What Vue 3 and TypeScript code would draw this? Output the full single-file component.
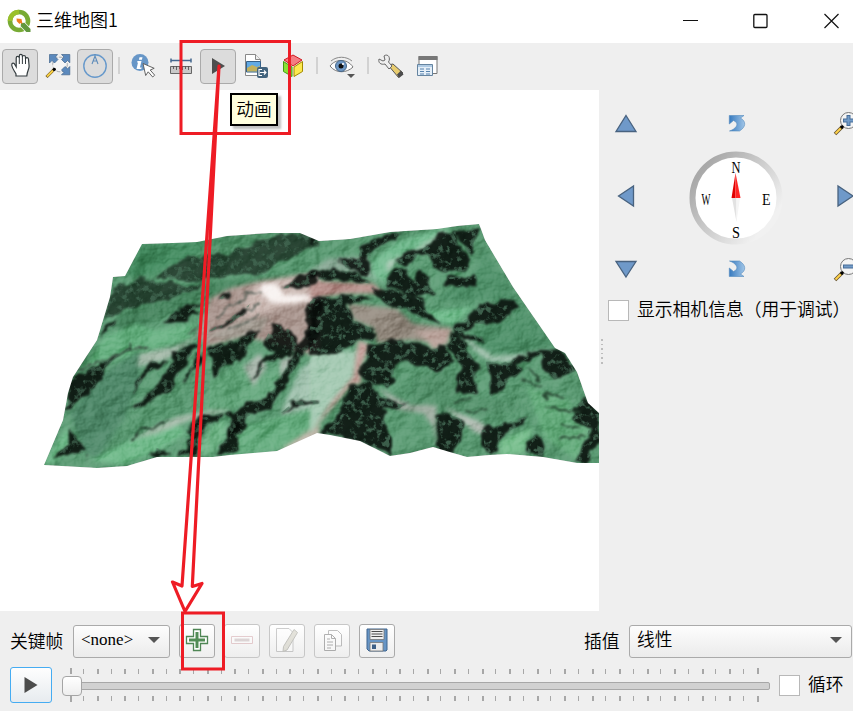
<script setup lang="ts">
interface Tick { x: number; w: number; h: number; y: number }

const ticks: Tick[] = Array.from({ length: 51 }, (_, i) => {
  const edge = i === 0 || i === 50
  return { x: Math.floor(8 + i * 13.74), w: i % 2 === 0 ? 2 : 1, h: edge ? 6 : 5, y: edge ? 0 : 1 }
})

const outline =
  'M142 244L173 243 197 242 227 236 270 233 300 233 319 241 350 239 390 232 437 229 457 226 479 224 481 229 485 240 513 287 555 348 565 353 577 372 588 403 599 413V463L577 463 543 457 507 454 490 455 467 457 453 453 433 447 410 453 390 456 360 441 330 435 317 433 277 451 230 455 213 457 157 457 127 466 97 468 44 465 63 420 68 393 73 377 97 340 110 297 113 277 125 276Z'

const leftShadows: string[] = [
  'M375 172L460 112 520 110 600 108 620 85 700 62 760 45 840 42 868 60V78L800 100 740 130 700 165 620 160 560 175 480 185 430 178Z',
  'M248 200L290 185 340 178 430 190 460 200 520 185 500 205 400 240 330 255 290 270 222 297 235 250Z',
  'M200 350L225 312 268 300 225 335Z',
  'M130 470L190 440 290 388 290 355 302 390 260 410 225 440 200 490 165 530 108 572Z',
  'M430 400L500 370 500 385 455 440 430 505 380 535 300 580 345 530 385 495 412 450Z',
  'M308 525L325 470 365 425 410 416 370 440 340 480Z',
  'M535 390L640 350 690 335 655 380 635 420 590 430 550 480 545 420Z',
  'M530 337L590 300 660 253 645 280 590 318Z',
  'M868 235V345L840 385 805 420 765 500 720 570 650 590 635 640 600 655 592 580 680 545 730 510 780 420 820 350 830 250Z',
  'M438 712L480 660 482 610 510 590 590 580 530 620 508 660 500 712Z',
  'M595 600L630 600 620 690 560 712 590 650Z',
  'M60 722L110 680 118 625 155 672 172 742 160 700 90 712Z',
  'M350 706L380 684 418 697Z',
  'M760 205L800 175 868 155V180L800 205Z',
  'M665 485L690 435 730 400 700 370 730 310 780 330 810 370 780 405 710 430Z',
  'M560 240L610 205 590 238Z',
  'M400 305L450 270 530 245 480 275 520 280 455 300Z',
  'M455 490L500 405 520 400 475 470Z',
  'M750 582L790 545 868 540V552L800 556Z',
]

const rightShadows: string[] = [
  'M0 55L20 60 0 85Z',
  'M0 155L80 150 150 162 180 190 80 180 0 178Z',
  'M0 237L100 225 190 240 110 252 128 300 185 325 188 362 140 362 80 398 0 402Z',
  'M185 205L235 202 340 240 330 260 390 305 340 300 290 270 225 250Z',
  'M145 110L155 80 220 45 280 38 225 65 190 90 180 115Z',
  'M425 30L510 15 500 60 480 110 455 70Z',
  'M260 120L310 95 350 80 400 35 430 40 470 120 475 150 420 160 380 150 350 100 268 135Z',
  'M235 160L290 140 310 190 330 150 360 185 380 220 340 230 310 230 270 210 232 195Z',
  'M410 170L500 168 500 195 405 202Z',
  'M430 325L500 272 510 248 600 240 627 255 560 310 500 312 445 335 520 350 520 365 430 345Z',
  'M415 340L455 352 480 400 500 450 500 520 475 520 440 522 452 450 420 380Z',
  'M185 380L230 365 300 360 360 390 415 380 425 420 380 450 320 430 270 430 235 500 160 485 150 450Z',
  'M130 495L180 485 210 520 260 550 300 560 215 570 240 640 240 705 150 662 20 640 70 600Z',
  'M380 590L400 580 465 600 450 660 430 702 380 685Z',
  'M515 630L580 610 655 588 620 620 570 650 560 705 530 708Z',
  'M648 702L672 645 706 660 702 708Z',
  'M528 425L600 425 640 405 735 385 765 400 795 455 735 478 710 450 700 402 615 430 635 450 545 530Z',
  'M778 568L830 535 868 580V660L825 732 798 722 840 620 790 600Z',
  'M90 130L100 110 175 112 178 165 120 150Z',
]
</script>

<template>
  <div class="window">
    <header class="titlebar">
      <svg class="logo" viewBox="0 0 24 24">
        <circle cx="12" cy="12" r="9" fill="none" stroke="#78ab34" stroke-width="4.6" />
        <path d="M3 12a9 9 0 0 1 9-9" fill="none" stroke="#9ac02c" stroke-width="4.4" />
        <path d="M13 13L22 22" stroke="#fff" stroke-width="6.5" />
        <path d="M14 14l3.5-.2 6 6.2v3h-4.2l-5.6-5.8z" fill="#62983e" />
        <path d="M9.500 9.500l5 .4 1 5-2-1-1 1-2.700-2.700z" fill="#ef7d22" />
      </svg>
      <h1>三维地图1</h1>
      <svg class="winbtn" viewBox="0 0 16 16"><path d="M1 7.500h15" stroke="#111" stroke-width="1" /></svg>
      <svg class="winbtn" viewBox="0 0 16 16"><rect x="1.800" y="1.500" width="13.200" height="13" rx="1" fill="none" stroke="#111" stroke-width="1.300" /></svg>
      <svg class="winbtn last" viewBox="0 0 16 16"><path d="M1.500 1l14 14M15.500 1l-14 14" stroke="#111" stroke-width="1.200" /></svg>
    </header>

    <nav class="toolbar">
      <button class="tool on">
        <svg viewBox="0 0 24 24"><path d="M8 22v-2C6.500 17 4.500 15 3.800 11.500 3.300 8.800 6 8.300 7 10.800l1.200 2V4c0-2.200 3-2.200 3.100 0V2c0-2.200 3-2.200 3.100 0v1c.2-2 3-2 3.100.2V5c.2-1.900 3-1.700 3 .3l.6 6.700c0 4-2 5-2.300 10z" fill="#fff" stroke="#333b3e" stroke-width="1.200" /><path d="M11.300 4v6M14.400 3v7M17.500 4v6" stroke="#333b3e" /></svg>
      </button>
      <button class="tool">
        <svg viewBox="0 0 24 24"><circle cx="13" cy="10.500" r="7.300" fill="#f5f5f5" stroke="#a5a9ad" stroke-dasharray="4 1.500" /><path d="M2.500.5h8L8.500 3 11 5.500 7.500 9 5 6.500 2.500 9zM14.500.5h8.300v8.300L20.500 6.500 18 9l-3.500-3.500L17 3zM22.800 12.500v8.300h-8.300l2.300-2.300-2.300-2.500 3.500-3.500 2.500 2.300z" fill="#5b89bd" stroke="#45678e" stroke-width=".7" /><path d="M7 15.500L-.5 23" stroke="#695324" stroke-width="3" /><path d="M6 16.500L0 22.500" stroke="#f6ce44" stroke-width="2" /><circle cx="7.300" cy="15.300" r="1.600" /></svg>
      </button>
      <button class="tool on">
        <svg viewBox="0 0 24 24"><circle cx="12" cy="12" r="11.200" fill="none" stroke="#6799cb" stroke-width="1.400" /><path d="M9 10l3-8 3 8M10 7h4M12 2V0" fill="none" stroke="#5e8cba" stroke-width="1.100" /></svg>
      </button>
      <i class="sep" />
      <button class="tool">
        <svg viewBox="0 0 24 24"><circle cx="9" cy="8.500" r="8.500" fill="#6796c7" /><path d="M8.500 3.200h3l-.6 2.500h-3zM6.500 7h4l-1.600 6.500h1.800l-.5 1.500H5.500L7 8.500H6z" fill="#fff" /><path d="M12 9.500l2.700 12 2.500-3.700 4.500 5.200 2-1.800-4.500-5.200 4-1.700z" fill="#fff" stroke="#555" stroke-width=".9" /></svg>
      </button>
      <button class="tool">
        <svg viewBox="0 0 24 24"><path d="M2 6.500h20M2 4.500v4M22 4.500v4" stroke="#45688f" stroke-width="1.500" /><path d="M1.500 12.500h21v7h-21z" fill="#c9c9c9" stroke="#666" /><path d="M4.500 12v3M7.500 12v4M10.500 12v3M13.500 12v4M16.500 12v3M19.500 12v4" stroke="#555" stroke-width=".9" /></svg>
      </button>
      <button class="tool on">
        <svg viewBox="0 0 24 24"><path d="M6 4v16l13-8z" fill="#4e4e4e" /></svg>
      </button>
      <button class="tool">
        <svg viewBox="0 0 24 24"><path d="M1.500.5h10l5 5v16h-15z" fill="#fff" stroke="#888" /><path d="M11.500.5v5h5" fill="#eee" stroke="#888" /><path d="M2.500 7.500h14V18h-14z" fill="#62aae5" stroke="#35618a" /><path d="M3 14l5-3 5 2 3-1v5.500H3z" fill="#c2b15e" /><rect x="13" y="13" width="11" height="11" rx="2" fill="#43647e" /><path d="M18 15.500h-3v6h3M16 18.500h6M20 16.500l2 2-2 2" fill="none" stroke="#fff" stroke-width="1.100" /></svg>
      </button>
      <button class="tool">
        <svg viewBox="0 0 24 24"><path d="M12 1l9 5-9 6-9-6z" fill="#f47d83" stroke="#cf171d" /><path d="M2.500 7.500L11 13v9.500l-8.500-5z" fill="#8ae234" stroke="#439b12" /><path d="M21.500 7.500L13 13v9.500l8.500-5z" fill="#fce94f" stroke="#a48a00" /></svg>
      </button>
      <i class="sep" />
      <button class="tool wide">
        <svg viewBox="0 0 26 24"><path d="M1 12C6 5 18 4 24 13 18 19 7 20 1 12z" fill="#fff" stroke="#777" /><path d="M2 7C8 2 17 2 23 7" fill="none" stroke="#888" /><circle cx="12" cy="12" r="5.500" fill="#6f98c5" stroke="#466687" /><circle cx="12" cy="12" r="2.500" fill="#111" /><circle cx="14" cy="10" r="1.100" fill="#fff" /><path d="M18 20h8l-4 4z" fill="#555" /></svg>
      </button>
      <i class="sep" />
      <button class="tool wide">
        <svg viewBox="0 0 26 24"><path d="M10 11l5-1 10 9-4.500 4.500z" fill="#e9cd70" stroke="#555" /><path d="M1 5l4 2 2-1-1-4C10-1 13 4 10.500 8L14 12l-3 3-4-5C3 11 0 9 1 5z" fill="#eee" stroke="#666" /><path d="M19 20.500l4-4 2.500 4L21 24z" fill="#4c4c4c" /></svg>
      </button>
      <button class="tool">
        <svg viewBox="0 0 24 24"><path d="M4 2.500h18v17H4z" fill="#fff" stroke="#777" /><path d="M3.500 2h19v4h-19z" fill="#777" /><path d="M2.500 10.500h15v11h-15z" fill="#e5eff8" stroke="#6584a0" /><path d="M3 11h14v2H3z" fill="#b0cbe4" /><path d="M5 15h4M11 15h4M5 17.500h4M11 17.500h4M5 20h4M11 20h4" stroke="#5682ad" stroke-width="1.200" /></svg>
      </button>
    </nav>

    <main class="content">
      <svg class="terrain" viewBox="0 90 599 521">
        <defs>
          <clipPath id="land"><path :d="outline" /></clipPath>
          <filter id="rough" x="-5%" y="-5%" width="110%" height="110%" color-interpolation-filters="sRGB">
            <feTurbulence type="fractalNoise" baseFrequency=".022" numOctaves="4" seed="8" />
            <feDisplacementMap in="SourceGraphic" scale="38" xChannelSelector="R" yChannelSelector="G" result="d" />
            <feGaussianBlur in="d" stdDeviation="2.600" />
          </filter>
          <filter id="soft" x="-20%" y="-20%" width="140%" height="140%" color-interpolation-filters="sRGB"><feGaussianBlur stdDeviation="7" /></filter>
          <filter id="relief" x="0" y="0" width="100%" height="100%" color-interpolation-filters="sRGB">
            <feTurbulence type="fractalNoise" baseFrequency=".022 .028" numOctaves="5" seed="4" result="n" />
            <feColorMatrix in="n" type="matrix" values="0 0 0 0 0  0 0 0 0 0  0 0 0 0 0  1 0 0 0 0" result="a" />
            <feDiffuseLighting in="a" surfaceScale="9" diffuseConstant=".66" lighting-color="#fff"><feDistantLight azimuth="215" elevation="50" /></feDiffuseLighting>
          </filter>
          <filter id="grain" x="0" y="0" width="100%" height="100%" color-interpolation-filters="sRGB">
            <feTurbulence type="fractalNoise" baseFrequency=".05" numOctaves="4" seed="12" />
            <feColorMatrix type="matrix" values="0 0 0 0 .29  0 0 0 0 .45  0 0 0 0 .36  5 0 0 0 -2.550" result="g" />
            <feComposite in="g" in2="SourceAlpha" operator="in" />
          </filter>
        </defs>
        <g clip-path="url(#land)">
          <path :d="outline" fill="#5c9b74" />
          <g transform="translate(30 220) scale(.33333)">
            <g filter="url(#soft)">
              <path d="M330 75L600 55 480 110 370 165 290 170Z" fill="#468d62" />
              <path d="M440 200L700 165 700 190 520 240 300 330 230 320 300 270Z" fill="#48855f" />
              <path d="M370 330L500 310 480 360 400 380 160 450 220 350 320 310Z" fill="#68b182" />
              <path d="M120 580L220 460 330 390 330 480 280 600 200 720 160 690Z" fill="#50896a" />
              <path d="M40 735L110 620 130 680 70 730ZM180 720L300 660 430 600 470 640 390 690 280 735Z" fill="#70b98a" />
              <path d="M330 400L430 380 520 340 410 420 320 440Z" fill="#a4b9a9" />
              <path d="M500 345L540 235 600 205 700 180 868 155V410L650 350 530 380Z" fill="#ad9a93" />
              <path d="M680 190L868 155V235L760 260 700 280 620 300Z" fill="#cdbcb6" />
              <path d="M520 350L640 300 720 290 690 340 600 360Z" fill="#a8a198" />
              <path d="M868 400L810 450 750 580 868 600Z" fill="#a3c3b0" />
              <path d="M300 660L440 590 650 550 590 575 480 600 380 640Z" fill="#a5baa9" />
              <path d="M620 620L750 590 868 560V640L740 692 600 706Z" fill="#68ae81" />
              <path d="M868 610L750 690 820 685 868 650Z" fill="#bdb5a8" />
              <path d="M540 480L640 430 660 490 740 440 780 410 720 530 600 570 520 570Z" fill="#65a77d" />
              <path d="M640 440L690 400 710 440 670 500ZM750 420L800 400 750 480Z" fill="#a9b7ac" />
              <path d="M550 610L590 600 585 650 540 710 500 700Z" fill="#74b78b" />
            </g>
            <path d="M695 190L740 192 765 225 868 225V240L760 252 720 245 690 215Z" fill="#f8f3f1" filter="url(#soft)" />
          </g>
          <g transform="translate(310 220) scale(.33333)">
            <g filter="url(#soft)">
              <path d="M190 120L260 65 400 25 430 20 310 95 240 130 230 190 180 180Z" fill="#74bb90" />
              <path d="M230 125L310 92 410 28 400 45 350 80 260 122 232 160Z" fill="#b0cbb9" />
              <path d="M0 150L60 115 170 110 190 170 240 195 140 160Z" fill="#8aa996" />
              <path d="M0 180L190 190 220 220 100 222 0 238Z" fill="#b8948f" />
              <path d="M110 250L260 265 310 310 430 325 410 375 300 360 200 370 190 325 130 300Z" fill="#968d82" />
              <path d="M310 335L420 325 415 370 370 390 340 350Z" fill="#b8a199" />
              <path d="M0 400L145 390 130 490 0 640Z" fill="#a4c9b2" />
              <path d="M145 360L180 375 150 450 155 490 125 495 0 640 70 540 130 470Z" fill="#c4a19b" />
              <path d="M520 80L640 260 750 390 620 410 520 390 480 340 620 290 550 240 370 240 490 170Z" fill="#4f9069" />
              <path d="M350 275L490 260 430 315 370 300Z" fill="#74bd8f" />
              <path d="M460 345L550 410 650 400 730 380 600 425 540 425 480 380Z" fill="#a6c3b1" />
              <path d="M200 500L300 555 380 555 380 690 370 620 340 580 270 570Z" fill="#9eaca0" />
              <path d="M310 470L440 440 450 530 530 530 650 560 520 590 400 560 300 550Z" fill="#55926c" />
              <path d="M650 500L780 540 790 600 840 620 800 720 700 650Z" fill="#66ac7d" />
              <path d="M400 560L520 610 540 640 500 640Z" fill="#b3bdb4" />
              <path d="M570 660L670 620 640 700 570 710Z" fill="#77bd8c" />
            </g>
          </g>
          <rect class="shade" x="40" y="220" width="560" height="250" filter="url(#relief)" />
          <g fill="#060b08">
            <g transform="translate(30 220) scale(.33333)">
              <g filter="url(#rough)">
                <path v-for="(d, i) in leftShadows" :key="i" :d="d" :fill-opacity="i < 2 ? 0.6 : 0.88" />
                <path d="M300 657L350 625 410 600" fill="none" stroke="#14231a" stroke-width="5" />
                <path d="M350 385L300 388 240 412M650 370L615 400M500 320L470 338M690 250L650 265M140 450L280 395M560 290L620 240 690 215M600 330L690 285" fill="none" stroke="#3b4a41" stroke-width="4" />
              </g>
              <g filter="url(#grain)" opacity=".6"><path v-for="(d, i) in leftShadows" :key="i" :d="d" /></g>
            </g>
            <g transform="translate(310 220) scale(.33333)">
              <g filter="url(#rough)">
                <path v-for="(d, i) in rightShadows" :key="i" :d="d" fill-opacity=".86" />
                <path d="M530 565L470 575M640 480L690 500M690 525L770 530M710 560L800 580M750 610L815 625M755 655L820 648M430 540L490 537M650 440L690 480" fill="none" stroke="#25422f" stroke-width="6" />
              </g>
              <g filter="url(#grain)" opacity=".75"><path v-for="(d, i) in rightShadows" :key="i" :d="d" /></g>
            </g>
          </g>
        </g>
      </svg>

      <aside class="panel">
        <div class="pad">
          <svg viewBox="0 0 24 24"><path d="M12 4.500L22 20.500H2z" fill="#6f99c9" stroke="#48627f" stroke-width="1.300" /></svg>
          <svg class="turn" viewBox="0 0 24 24"><path d="M4.300 4.500H19L15.500 7c6 3.500 5.500 9-1 13H4.500c6-2 9-6 6.500-9L8.500 9.500 4.300 13z" fill="url(#bend)" stroke="#538abd" stroke-width=".6" /><defs><linearGradient id="bend"><stop stop-color="#377abf" /><stop offset="1" stop-color="#a0c5e7" /></linearGradient></defs></svg>
          <svg viewBox="0 0 24 24"><circle cx="15.500" cy="9.500" r="8" fill="#f4f4f4" stroke="#777" /><path d="M15.500 4v11M10 9.500h11" stroke="#466d98" stroke-width="4" /><path d="M15.500 5v9M11 9.500h9" stroke="#729bc7" stroke-width="2" /><path d="M9 16l-7 7" stroke="#65512f" stroke-width="3.500" /><path d="M8 17l-5.500 5.500" stroke="#ffd34b" stroke-width="2" /><circle cx="9" cy="16" r="1.800" /></svg>
          <svg viewBox="0 0 24 24"><path d="M4.500 12L19.500 2v20z" fill="#6f99c9" stroke="#48627f" stroke-width="1.300" /></svg>
          <div class="compass">
            <svg viewBox="0 0 92 92">
              <defs><linearGradient id="rim" x1=".1" y1=".2" x2=".85" y2=".8"><stop stop-color="#a9a9a9" /><stop offset="1" stop-color="#f1f1f1" /></linearGradient></defs>
              <circle cx="46" cy="46" r="43.500" fill="#fff" stroke="url(#rim)" stroke-width="6" />
              <path d="M45.500 21L41.500 46h4z" fill="#e00000" /><path d="M45.500 21L50.500 46h-5z" fill="#ff2424" />
              <path d="M42 46h4.500v24z" fill="#e2e2e2" /><path d="M46.500 46H50l-3.500 24z" fill="#f5f5f5" />
              <text x="41.500" y="21" textLength="9" lengthAdjust="spacingAndGlyphs">N</text><text x="42" y="86" textLength="8" lengthAdjust="spacingAndGlyphs">S</text><text x="11.500" y="53" textLength="9" lengthAdjust="spacingAndGlyphs">W</text><text x="72" y="53" textLength="8.500" lengthAdjust="spacingAndGlyphs">E</text>
            </svg>
          </div>
          <svg viewBox="0 0 24 24"><path d="M20 12L5 2v20z" fill="#6f99c9" stroke="#48627f" stroke-width="1.300" /></svg>
          <svg viewBox="0 0 24 24"><path d="M12 20L22 4.500H2z" fill="#6f99c9" stroke="#48627f" stroke-width="1.300" /></svg>
          <svg class="turn" viewBox="0 0 24 24"><path d="M4.300 19.500H19L15.500 17c6-3.500 5.500-9-1-13H4.500c6 2 9 6 6.500 9l-2.500 1.500L4.300 11z" fill="url(#bend)" stroke="#538abd" stroke-width=".6" /></svg>
          <svg viewBox="0 0 24 24"><circle cx="15.500" cy="9.500" r="8" fill="#f4f4f4" stroke="#777" /><path d="M10 9.500h11" stroke="#466d98" stroke-width="4" /><path d="M11 9.500h9" stroke="#729bc7" stroke-width="2" /><path d="M9 16l-7 7" stroke="#65512f" stroke-width="3.500" /><path d="M8 17l-5.500 5.500" stroke="#ffd34b" stroke-width="2" /><circle cx="9" cy="16" r="1.800" /></svg>
        </div>
        <label class="debug"><span class="check" /><span class="txt">显示相机信息（用于调试）</span></label>
        <div class="grip" />
      </aside>
    </main>

    <footer class="animation">
      <div class="keys">
        <span class="lbl">关键帧</span>
        <div class="combo keyframe"><span class="none">&lt;none&gt;</span><i class="caret" /></div>
        <button class="act add"><svg viewBox="0 0 24 24"><path d="M8.500 1.500h7v7h7v7h-7v7h-7v-7h-7v-7h7z" fill="#fff" stroke="#4f8655" stroke-width="1.300" /><path d="M12 4v16M4 12h16" stroke="#518c55" stroke-width="3" /></svg></button>
        <button class="act off"><svg viewBox="0 0 24 24"><path d="M1.500 8.500h21v7h-21z" fill="#fff" stroke="#c88b91" /><path d="M4.500 12h15" stroke="#b6a2a3" stroke-width="3" /></svg></button>
        <button class="act off"><svg viewBox="0 0 24 24"><path d="M1.500.500H14l4 4v19H1.500z" fill="#fff" stroke="#888" /><path d="M19 1.500l3.500 3L12 22l-4 1.500.5-5z" fill="#c2bfac" stroke="#77766b" /></svg></button>
        <button class="act off"><svg viewBox="0 0 24 24"><path d="M8.500 2.500h9l4 4V18h-13z" fill="#fff" stroke="#666" /><path d="M4.500 6.500h7l4 4v12h-11z" fill="#fff" stroke="#444" /><path d="M11.500 6.500v4h4M7 11h3M7 14h6M7 17h6M7 20h4" fill="none" stroke="#444" /></svg></button>
        <button class="act"><svg viewBox="0 0 24 24"><path d="M2 1h20v21l-1 1H4l-2-2z" fill="#6795c5" stroke="#3f648f" /><path d="M5 1.500h14v10H5z" fill="#f0f0f0" stroke="#777" stroke-width=".8" /><path d="M6.500 3.500h11M6.500 6h11M6.500 8.500h11" stroke="#4d4d4d" stroke-width="1.200" /><path d="M5 14.500h13V23H5z" fill="#ececec" stroke="#777" stroke-width=".8" /><path d="M7 16.500h4V21H7z" fill="#3d5f86" /></svg></button>
        <span class="lbl interp">插值</span>
        <div class="combo linear"><span class="txt">线性</span><i class="caret" /></div>
      </div>
      <div class="timeline">
        <button class="run"><svg viewBox="0 0 24 24"><path d="M5.500 4v16l13-8z" fill="#4c4c4c" /></svg></button>
        <div class="slider">
          <svg class="ticks" viewBox="0 0 708 35" shape-rendering="crispEdges">
            <g fill="#a7a7a7">
              <template v-for="(t, i) in ticks" :key="i">
                <rect :x="t.x" :y="t.y" :width="t.w" :height="t.h" />
                <rect :x="t.x" y="28" :width="t.w" :height="t.h" />
              </template>
            </g>
          </svg>
          <i class="groove" /><i class="handle" />
        </div>
        <label class="loop"><span class="check" /><span class="txt">循环</span></label>
      </div>
    </footer>

    <div class="tooltip">动画</div>
    <svg class="marks" viewBox="0 0 853 711" fill="none" stroke="#ee1c25">
      <path d="M181 41.500h108.500v92H181zM182.500 613h41v56h-41z" stroke-width="3" />
      <path d="M219 66L192.300 586.500 202 583.500 185 611.500 172.500 582 182 586z" stroke-width="3.200" stroke-linejoin="round" />
    </svg>
  </div>
</template>

<style>
body { margin: 0; overflow: hidden; }
</style>

<style scoped>
* { box-sizing: border-box; }
.window { position: relative; display: flex; flex-direction: column; width: 853px; height: 711px; overflow: hidden; background: #efefef; color: #000; font: 350 17.800px/24px "Noto Sans CJK SC", "Liberation Sans", sans-serif; }
svg { display: block; flex: none; overflow: visible; }
button { padding: 0; background: none; border: 0; display: flex; align-items: center; justify-content: center; }
.titlebar { height: 43px; flex: none; background: #fff; display: flex; align-items: center; padding: 0 14px 2px 7px; }
.logo { width: 24px; height: 24px; margin-right: 5px; }
h1 { flex: 1; margin: 0 0 3px; font-size: 18px; font-weight: 350; line-height: 24px; }
.winbtn { width: 16px; height: 16px; margin-left: 54px; }
.winbtn.last { margin-left: 55px; }
.toolbar { height: 47px; flex: none; display: grid; align-items: start; padding: 6px 0 0 2px; grid-template-columns: 36px 3px 36px 36px 12px 36px 2px 36px 1px 36px 2px 36px 1px 36px 12px 40px 9px 37px 37px; }
.tool { width: 36px; height: 35px; border-radius: 4px; }
.tool svg { width: 24px; height: 24px; margin-bottom: 1px; }
.tool.wide { width: 38px; }
.tool.wide svg { width: 26px; }
.tool:nth-child(2) { grid-column: 3; }
.tool:nth-child(3) { grid-column: 4; }
.tool:nth-child(5) { grid-column: 6; }
.tool:nth-child(6) { grid-column: 8; }
.tool:nth-child(7) { grid-column: 10; }
.tool:nth-child(8) { grid-column: 12; }
.tool:nth-child(9) { grid-column: 14; }
.tool.on { background: #dcdcdc; border: 1.500px solid #aaa; }
.sep { width: 2px; height: 17px; margin-top: 8px; background: #d2d2d2; justify-self: center; }
.content { height: 521px; flex: none; display: flex; }
.terrain { width: 599px; height: 521px; background: #fff; overflow: hidden; }
.shade { mix-blend-mode: soft-light; opacity: .75; }
.panel { width: 254px; flex: none; }
.pad { display: grid; grid-template-columns: 24px 93px 24px; grid-template-rows: 24px 92px 24px; column-gap: 51px; row-gap: 15px; padding: 21px 0 0 15px; align-items: center; justify-items: center; }
.pad > svg { width: 24px; height: 24px; }
.pad > .turn { margin-left: 3px; }
.compass, .compass svg { width: 92px; height: 92px; }
.compass { margin-top: 3px; }
.compass text { font: 400 17px "Liberation Serif", serif; }
.debug { display: flex; align-items: center; height: 24px; margin-top: 17px; padding-left: 9px; white-space: nowrap; }
.txt { position: relative; top: -2px; }
.check { width: 21px; height: 21px; border: 1.500px solid #b8b8b8; background: #fff; margin-right: 8px; flex: none; }
.grip { width: 2px; height: 25px; margin: 17px 0 0 2px; background: repeating-linear-gradient(#bdbdbd 0 1.500px, transparent 1.500px 4.600px); }
.animation { flex: 1; padding: 13px 1px 0 10px; }
.keys { display: flex; align-items: center; height: 34px; }
.lbl { width: 54px; flex: none; white-space: nowrap; margin-bottom: 3px; }
.combo { height: 33px; flex: none; border: 1.500px solid #aaa; border-radius: 3px; background: linear-gradient(#fdfdfd, #ebebeb); display: flex; align-items: center; justify-content: space-between; padding: 0 9px 2px 7px; }
.keyframe { width: 97px; margin-left: 9px; }
.none { font: 400 17px/20px "Liberation Serif", serif; }
.caret { border: 6px solid transparent; border-top-color: #555; border-bottom: 0; }
.act { width: 36px; height: 34px; margin-left: 9px; flex: none; border: 1.500px solid #aaa; border-radius: 3px; background: linear-gradient(#fff, #eee); }
.act svg { width: 24px; height: 24px; margin-bottom: 2px; }
.act.off { border-color: #c7c7c7; }
.act.off svg { opacity: .4; }
.interp { width: 36px; margin-left: 189px; }
.linear { width: 223px; margin-left: 9px; }
.timeline { display: flex; align-items: center; height: 36px; margin-top: 9px; }
.run { width: 42px; height: 36px; border: 1.500px solid #45acf2; border-radius: 3px; background: linear-gradient(#fefefe, #e7ebef); flex: none; }
.run svg { width: 24px; height: 24px; }
.slider { display: grid; align-items: center; width: 708px; height: 35px; margin-left: 10px; flex: none; }
.slider > * { grid-area: 1 / 1; }
.ticks { width: 708px; height: 35px; }
.groove { height: 8px; border: 1.500px solid #a7a7a7; border-radius: 2px; background: #d1d1d1; margin-top: 2px; }
.handle { width: 20px; height: 20px; border: 1.500px solid #a5a5a5; border-radius: 4px; background: linear-gradient(#fff, #eee); margin-top: 2px; }
.loop { display: flex; align-items: center; margin-left: 9px; white-space: nowrap; }
.loop .check { margin-right: 8px; }
.tooltip { position: absolute; left: 230px; top: 93px; width: 48px; height: 33px; border: 2px solid #000; background: #ffffdf; line-height: 27px; text-align: center; box-shadow: 3px 3px 2px #8888; }
.marks { position: absolute; inset: 0; width: 853px; height: 711px; pointer-events: none; }
</style>
